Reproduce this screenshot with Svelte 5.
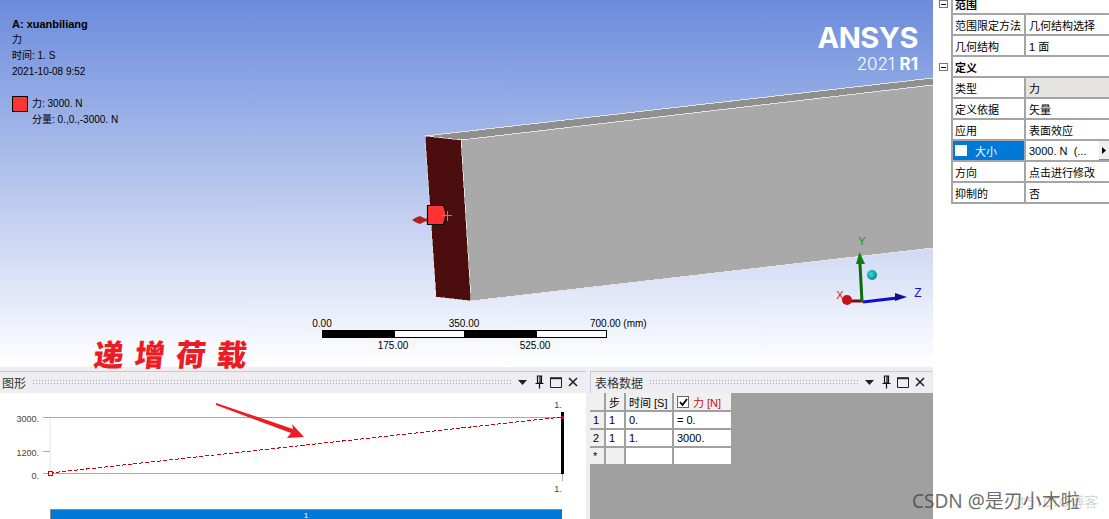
<script>
    // Scale bar: alternating black / white segments under the model
    const scaleSegments = [
        { x: 322, w: 72, fill: '#000' },
        { x: 394, w: 70, fill: '#fff' },
        { x: 464, w: 72, fill: '#000' },
        { x: 536, w: 70, fill: '#fff' }
    ];

    const scope = [
        { label: '范围限定方法', value: '几何结构选择' },
        { label: '几何结构', value: '1 面' }
    ];
    const definition = [
        { label: '类型', value: '力', readonly: true },
        { label: '定义依据', value: '矢量' },
        { label: '应用', value: '表面效应' },
        { label: '大小', value: '3000. N  (...', selected: true },
        { label: '方向', value: '点击进行修改' },
        { label: '抑制的', value: '否' }
    ];

    const rows = [
        { id: '1', step: '1', time: '0.', force: '= 0.' },
        { id: '2', step: '1', time: '1.', force: '3000.' },
        { id: '*', step: '', time: '', force: '' }
    ];
</script>

{#snippet panelHead(title)}
    <div class="panel-head">
        <span class="panel-title">{title}</span>
        <span class="grip"></span>
        <svg class="caret" width="9" height="5" viewBox="0 0 9 5"><path d="M0 0H9L4.5 5Z" fill="#222" /></svg>
        <svg width="9" height="14" viewBox="0 0 9 14">
            <path d="M2.5 1H6.5V8H2.5ZM0.5 8.5H8.5M4.5 9V13.5M5 1.5V8" fill="none" stroke="#111" stroke-width="1.2" />
        </svg>
        <svg width="12" height="11" viewBox="0 0 12 11">
            <path d="M0.5 1.5H11.5V10.5H0.5Z" fill="none" stroke="#222" stroke-width="1" />
            <path d="M0 1.2H12" stroke="#222" stroke-width="2" />
        </svg>
        <svg width="10" height="10" viewBox="0 0 10 10">
            <path d="M1 1L9 9M9 1L1 9" stroke="#222" stroke-width="1.6" />
        </svg>
    </div>
{/snippet}

{#snippet group(title, items, clipped)}
    <div class="group" class:clipped>
        <span class="toggle"><i></i></span>
        <span class="group-title">{title}</span>
    </div>
    {#each items as item}
        <div class="row">
            <div class="cell-label" class:selected={item.selected}>
                {#if item.selected}<span class="check"></span>{/if}
                {item.label}
            </div>
            <div class="cell-value" class:readonly={item.readonly}>
                <span>{item.value}</span>
                {#if item.selected}
                    <span class="more"><svg width="4" height="7" viewBox="0 0 4 7"><path d="M0 0L4 3.5L0 7Z" fill="#000" /></svg></span>
                {/if}
            </div>
        </div>
    {/each}
{/snippet}

<div class="app">
    <div class="main">
        <div class="viewport">
            <svg class="scene" width="933" height="367" viewBox="0 0 933 367">
                <defs>
                    <linearGradient id="sky" x1="0" y1="0" x2="0" y2="1">
                        <stop offset="0" stop-color="#6b8bdb" />
                        <stop offset="1" stop-color="#ffffff" />
                    </linearGradient>
                    <radialGradient id="ball" cx="0.4" cy="0.4" r="0.7">
                        <stop offset="0" stop-color="#2ce0e0" />
                        <stop offset="1" stop-color="#067a80" />
                    </radialGradient>
                </defs>
                <rect width="933" height="367" fill="url(#sky)" />

                <g shape-rendering="crispEdges">
                    <polygon points="425,136 933,78 933,85 461,140" fill="#8f8f8f" stroke="#e4e4e4" />
                    <polygon points="461,140 933,85 933,248 471,301" fill="#a9a9a9" stroke="#e4e4e4" />
                    <polygon points="425,136 461,140 471,301 436,297" fill="#4b0d0d" stroke="#e4e4e4" stroke-width="0.6" />
                </g>

                <!-- force marker -->
                <path d="M425 218.5H429V221.5H425L420 224L416 222.5L412 220L416 217.5L420 216Z" fill="#b3201f" />
                <path d="M427.5 205.5H443.5L445 209L446 215L444.5 221L443.5 224.5H427.5Z" fill="#ff3333" stroke="#000" stroke-width="1.2" />
                <path d="M442 215.5H452M447.5 211V221" stroke="#6f8fd6" stroke-width="1" />

                <!-- triad -->
                <path d="M848 301H863" stroke="#7a0d0d" stroke-width="3" />
                <circle cx="847" cy="300" r="5" fill="#c8101a" />
                <path d="M863 302L897 298" stroke="#0a10c8" stroke-width="3" />
                <path d="M895 293L907 297L895 301Z" fill="#10108c" />
                <path d="M862 302L860 264" stroke="#0b6b0b" stroke-width="3" />
                <path d="M859.5 252L865 264H856Z" fill="#0b7d0b" />
                <circle cx="872" cy="275" r="5" fill="url(#ball)" />
                <text class="axis-y" x="862" y="245" text-anchor="middle">Y</text>
                <text class="axis-x" x="840" y="299" text-anchor="middle">X</text>
                <text class="axis-z" x="918" y="297" text-anchor="middle">Z</text>

                <!-- scale bar -->
                {#each scaleSegments as s}
                    <rect x={s.x} y="330.5" width={s.w} height="7" fill={s.fill} stroke="#000" stroke-width="1" shape-rendering="crispEdges" />
                {/each}
                <text class="scale" x="322" y="327" text-anchor="middle">0.00</text>
                <text class="scale" x="464" y="327" text-anchor="middle">350.00</text>
                <text class="scale" x="590" y="327">700.00 (mm)</text>
                <text class="scale" x="393" y="349" text-anchor="middle">175.00</text>
                <text class="scale" x="535" y="349" text-anchor="middle">525.00</text>
            </svg>

            <div class="annotation">
                <div class="ann-title">A: xuanbiliang</div>
                <div>力</div>
                <div>时间: 1. S</div>
                <div>2021-10-08 9:52</div>
                <div class="legend">
                    <span class="swatch"></span>
                    <div>
                        <div>力: 3000. N</div>
                        <div>分量: 0.,0.,-3000. N</div>
                    </div>
                </div>
            </div>

            <div class="logo">
                <div class="logo-name">ANSYS</div>
                <div class="logo-ver">2021 <b>R1</b></div>
            </div>

            <div class="scrawl">递增荷载</div>
        </div>

        <div class="bottom">
            <section class="panel graph">
                {@render panelHead('图形')}
                <svg class="chart" width="586" height="126" viewBox="0 393 586 126">
                    <path d="M50 417V480" stroke="#e2e2e2" />
                    <path d="M43 417.5H562M43 473.5H562M43 451.5H50M562.5 474V481" stroke="#a8a8a8" fill="none" shape-rendering="crispEdges" />
                    <text class="tick" x="39" y="422" text-anchor="end">3000.</text>
                    <text class="tick" x="39" y="456" text-anchor="end">1200.</text>
                    <text class="tick" x="39" y="479" text-anchor="end">0.</text>
                    <path d="M50 473L562 417" stroke="#c8000a" stroke-dasharray="4 2" fill="none" shape-rendering="crispEdges" />
                    <rect x="48" y="471" width="4" height="4" fill="#fff" stroke="#c8000a" shape-rendering="crispEdges" />
                    <rect x="561" y="412" width="3" height="62" fill="#000" />
                    <rect x="561" y="416" width="3" height="3" fill="#c8000a" />
                    <text class="tick" x="558" y="408" text-anchor="middle">1.</text>
                    <text class="tick" x="558" y="492" text-anchor="middle">1.</text>
                    <rect x="50" y="509" width="512" height="11" fill="#0078d7" />
                    <path d="M50 509.5H562" stroke="#8a8a8a" />
                    <path d="M50.5 509V519" stroke="#8a8a8a" />
                    <text class="bar-label" x="306" y="518" text-anchor="middle">1</text>
                    <polygon points="216,403 293,429 292,424 304,437 287,438 291,433 216,405" fill="#ec1c24" />
                </svg>
            </section>

            <section class="panel tabular">
                {@render panelHead('表格数据')}
                <div class="grid-area">
                    <table>
                        <thead>
                            <tr>
                                <th class="c0"></th>
                                <th class="c1">步</th>
                                <th class="c2">时间 [S]</th>
                                <th class="c3">
                                    <span class="force-head">
                                        <span class="checked">
                                            <svg width="9" height="8" viewBox="0 0 9 8"><path d="M1 4L3.5 7L8 1" fill="none" stroke="#000" stroke-width="1.8" /></svg>
                                        </span>
                                        <span class="force-name">力 [N]</span>
                                    </span>
                                </th>
                            </tr>
                        </thead>
                        <tbody>
                            {#each rows as r}
                                <tr>
                                    <th>{r.id}</th>
                                    <td class:blank={!r.step}>{r.step}</td>
                                    <td>{r.time}</td>
                                    <td>{r.force}</td>
                                </tr>
                            {/each}
                        </tbody>
                    </table>
                </div>
            </section>
        </div>
    </div>

    <aside class="details">
        {@render group('范围', scope, true)}
        {@render group('定义', definition, false)}
    </aside>

    <div class="watermark">
        <span class="wm-ghost">@51CTO博客</span>
        <span class="wm-main">CSDN @是刃小木啦</span>
    </div>
</div>

<style>
    :global(body) {
        margin: 0;
        background: #fff;
    }
    .app {
        position: relative;
        display: flex;
        width: 1109px;
        height: 519px;
        overflow: hidden;
        font-family: "Liberation Sans", "Noto Sans CJK SC", sans-serif;
        font-size: 11px;
        color: #000;
    }
    .main {
        width: 933px;
        display: flex;
        flex-direction: column;
        flex: none;
    }
    .viewport {
        position: relative;
        height: 367px;
        flex: none;
    }
    .scene {
        display: block;
    }
    .scene text {
        font-family: "Liberation Sans", sans-serif;
    }
    .axis-y {
        fill: #14a014;
        font-size: 11px;
    }
    .axis-x {
        fill: #e01010;
        font-size: 11px;
    }
    .axis-z {
        fill: #1010e0;
        font-size: 12px;
    }
    .scale {
        font-size: 10px;
        fill: #000;
    }
    .annotation {
        position: absolute;
        left: 12px;
        top: 16px;
        font-size: 10px;
        line-height: 16px;
    }
    .ann-title {
        font-weight: 700;
        font-size: 11px;
    }
    .legend {
        display: flex;
        gap: 4px;
        margin-top: 16px;
    }
    .swatch {
        width: 14px;
        height: 14px;
        margin-top: 0;
        background: #ff3333;
        border: 1px solid #000;
    }
    .logo {
        position: absolute;
        right: 15px;
        top: 22px;
        color: #fff;
        text-align: right;
    }
    .logo-name {
        font-family: Inter, sans-serif;
        font-weight: 700;
        font-size: 29px;
        line-height: 32px;
        letter-spacing: -0.5px;
    }
    .logo-ver {
        font-family: Inter, sans-serif;
        font-weight: 300;
        font-size: 17px;
        line-height: 20px;
    }
    .logo-ver b {
        font-weight: 700;
    }
    .scrawl {
        position: absolute;
        left: 94px;
        top: 333px;
        font-family: "Noto Sans CJK SC", sans-serif;
        font-weight: 900;
        font-size: 30px;
        line-height: 40px;
        letter-spacing: 11px;
        color: #ec1c24;
        transform: skewX(-6deg);
        white-space: nowrap;
    }

    .bottom {
        flex: 1;
        display: flex;
        gap: 4px;
        padding-top: 4px;
        background: #eeeef2;
        min-height: 0;
    }
    .panel {
        display: flex;
        flex-direction: column;
        min-width: 0;
    }
    .graph {
        width: 586px;
    }
    .tabular {
        flex: 1;
    }
    .panel-head {
        display: flex;
        align-items: center;
        gap: 6px;
        height: 22px;
        flex: none;
        box-sizing: border-box;
        border-top: 1px solid #c5c9de;
        padding: 0 8px 1px 2px;
    }
    .tabular .panel-head {
        padding: 0 8px 1px 4px;
        border-left: 1px solid #c5c9de;
    }
    .panel-title {
        font-size: 12px;
        color: #333;
        margin-right: 0;
    }
    .grip {
        flex: 1;
        height: 6px;
        background-image: radial-gradient(#aaa 0.7px, transparent 0.8px);
        background-size: 3px 3px;
    }
    .caret {
        margin-right: 2px;
    }
    .chart {
        display: block;
        background: #fff;
    }
    .chart text {
        font-family: "Liberation Sans", sans-serif;
    }
    .tick {
        font-size: 9px;
        fill: #444;
    }
    .bar-label {
        font-size: 8px;
        fill: #fff;
    }
    .grid-area {
        flex: 1;
        background: #a0a0a0;
        min-height: 0;
    }
    table {
        border-collapse: collapse;
        table-layout: fixed;
        width: 142px;
        font-size: 11px;
        background: #fff;
    }
    th,
    td {
        height: 18px;
        box-sizing: border-box;
        padding: 0 0 0 3px;
        border: 1px solid #a0a0a0;
        border-width: 0 2px 2px 0;
        font-weight: 400;
        text-align: left;
        overflow: hidden;
        white-space: nowrap;
    }
    th {
        background: #f0f0f0;
    }
    td.blank {
        background: #f0f0f0;
    }
    .c0 {
        width: 15px;
    }
    .c1 {
        width: 20px;
    }
    .c2 {
        width: 48px;
    }
    .c3 {
        width: 59px;
    }
    .force-head {
        display: flex;
        align-items: center;
        gap: 4px;
    }
    .checked {
        width: 12px;
        height: 12px;
        box-sizing: border-box;
        border: 1px solid #666;
        background: #fff;
        display: inline-flex;
        align-items: center;
        justify-content: center;
    }
    .force-name {
        color: #c8101a;
    }

    .details {
        width: 176px;
        flex: none;
        padding-left: 3px;
        box-sizing: border-box;
        background: #fff;
        font-size: 11px;
    }
    .group {
        position: relative;
        height: 21px;
        box-sizing: border-box;
        margin-left: 15px;
        padding-left: 2px;
        border-left: 2px solid #a5a5a5;
        border-bottom: 2px solid #a5a5a5;
        display: flex;
        align-items: center;
    }
    .group.clipped {
        margin-top: -6px;
    }
    .group-title {
        font-weight: 700;
    }
    .toggle {
        position: absolute;
        left: -14px;
        top: 6px;
        width: 9px;
        height: 8px;
        box-sizing: border-box;
        border: 1px solid #777;
        background: #fff;
        display: flex;
        align-items: center;
        justify-content: center;
    }
    .toggle i {
        width: 5px;
        height: 1px;
        background: #000;
    }
    .row {
        display: flex;
        height: 21px;
        box-sizing: border-box;
        margin-left: 15px;
        border-left: 2px solid #a5a5a5;
        border-bottom: 2px solid #a5a5a5;
    }
    .cell-label {
        width: 73px;
        flex: none;
        box-sizing: border-box;
        padding-left: 2px;
        border-right: 2px solid #a5a5a5;
        display: flex;
        align-items: center;
        white-space: nowrap;
    }
    .cell-label.selected {
        background: #0078d7;
        color: #fff;
    }
    .check {
        width: 12px;
        height: 11px;
        background: #fff;
        margin-right: 8px;
    }
    .cell-value {
        flex: 1;
        min-width: 0;
        box-sizing: border-box;
        padding-left: 3px;
        display: flex;
        align-items: center;
        justify-content: space-between;
        white-space: pre;
    }
    .cell-value.readonly {
        background: #e5e4e1;
    }
    .more {
        width: 10px;
        height: 19px;
        background: #efefef;
        border-bottom: 1px solid #888;
        box-sizing: border-box;
        display: flex;
        align-items: center;
        justify-content: center;
    }
    .watermark {
        position: absolute;
        left: 912px;
        top: 489px;
        width: 190px;
        height: 24px;
        font-family: "Noto Sans", "Noto Sans CJK SC", sans-serif;
        pointer-events: none;
    }
    .wm-main {
        position: absolute;
        left: 0;
        top: 0;
        font-size: 19px;
        font-weight: 400;
        line-height: 24px;
        color: rgba(70, 70, 70, 0.8);
        white-space: nowrap;
    }
    .wm-ghost {
        position: absolute;
        right: 4px;
        top: 3px;
        font-size: 14px;
        line-height: 20px;
        color: rgba(170, 170, 170, 0.5);
        white-space: nowrap;
    }
</style>
